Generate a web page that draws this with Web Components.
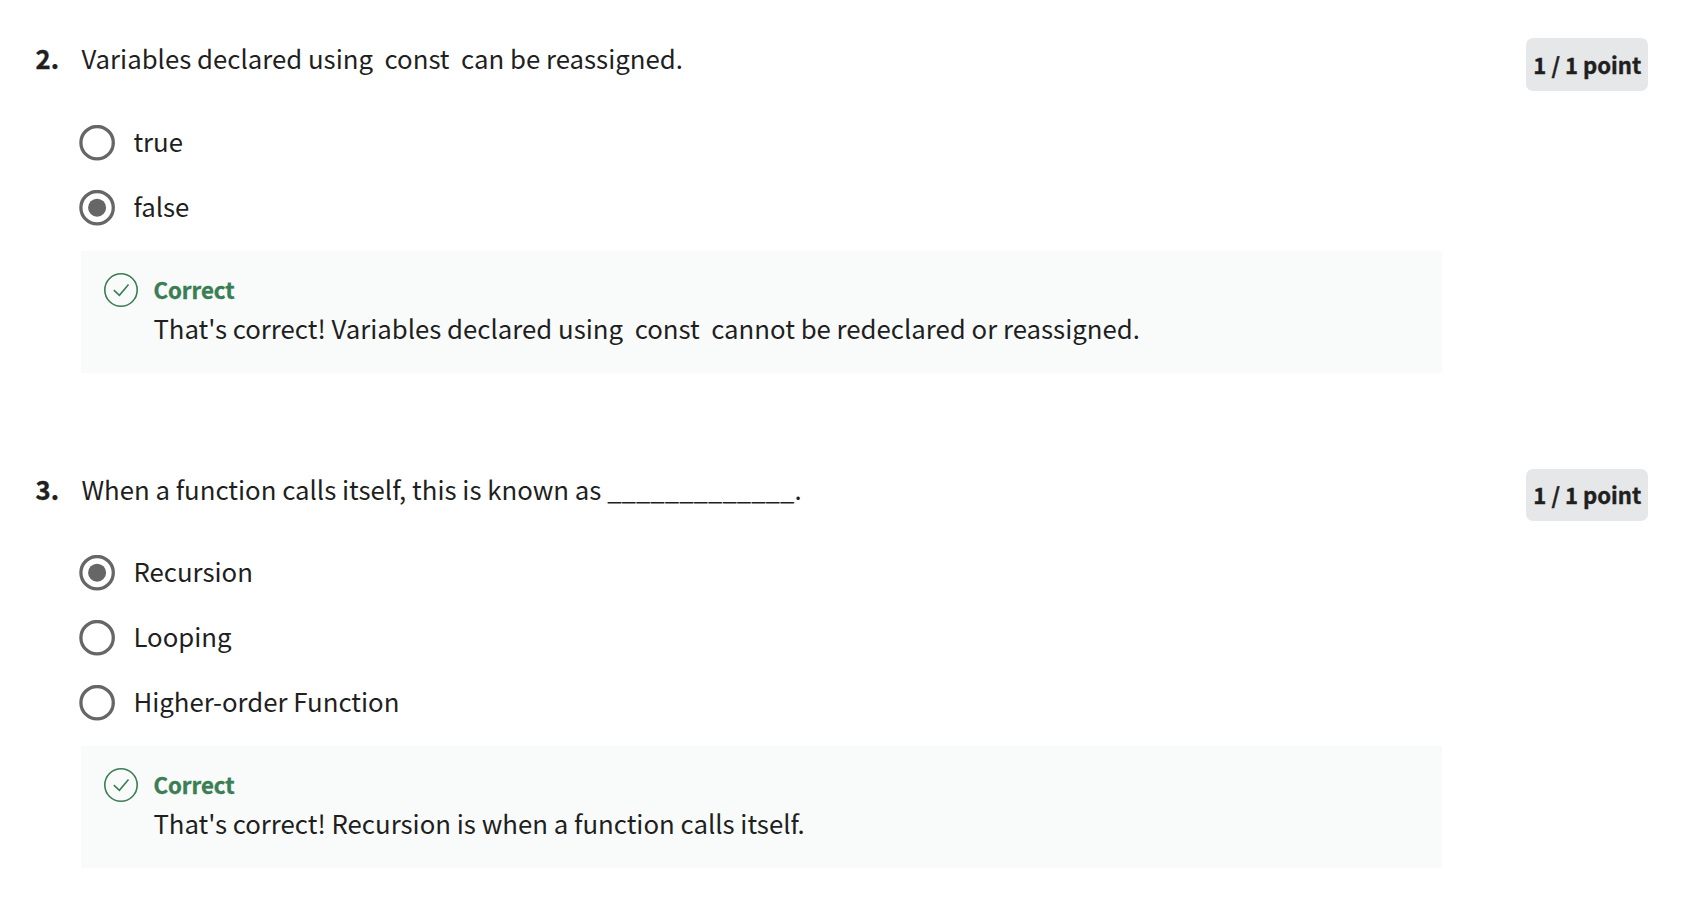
<!DOCTYPE html>
<html lang="en"><head><meta charset="utf-8"><title>Quiz</title>
<style>body{margin:0;background:#fff;color:#1f1f1f;font-family:"Noto Sans CJK SC","Noto Sans",sans-serif}</style></head>
<body>
<quiz-list>
<quiz-question number="2." points="1 / 1 point">
<span slot="prompt">Variables declared using&nbsp; const&nbsp; can be reassigned.</span>
<quiz-option>true</quiz-option><quiz-option checked>false</quiz-option>
<quiz-feedback slot="feedback" heading="Correct">That's correct! Variables declared using&nbsp; const&nbsp; cannot be redeclared or reassigned.</quiz-feedback>
</quiz-question>
<quiz-question number="3." points="1 / 1 point" style="--prompt-height:41px;--badge-height:52px;--badge-line:51px">
<span slot="prompt">When a function calls itself, this is known as _____________.</span>
<quiz-option checked>Recursion</quiz-option><quiz-option>Looping</quiz-option><quiz-option>Higher-order Function</quiz-option>
<quiz-feedback slot="feedback" heading="Correct">That's correct! Recursion is when a function calls itself.</quiz-feedback>
</quiz-question>
</quiz-list>
<script>
const define=(name,render)=>customElements.define(name,class extends HTMLElement{
  constructor(){super();this.attachShadow({mode:'open'});}
  connectedCallback(){this.shadowRoot.innerHTML=render(this);}
});
define('quiz-list',()=>`<style>:host{display:flex;flex-direction:column;gap:95px;padding:38px 52px 0 35px;height:900px;box-sizing:border-box;overflow:hidden}</style><slot></slot>`);
define('quiz-question',el=>`<style>
:host{display:grid;flex:none;grid-template-columns:46px 1361px 1fr;grid-template-rows:53px;font-size:25.77px;align-items:start}
.num,.prompt{line-height:var(--prompt-height,39px)}
.num{font-weight:700;font-size:25.7px;padding-left:.5px;-webkit-text-stroke:.35px}
.prompt{white-space:nowrap;padding-left:.4px}
.pts{justify-self:end;align-self:end;box-sizing:border-box;width:122px;height:var(--badge-height,53px);border-radius:7px;background:#e5e7e8;font-weight:700;font-size:22.1px;line-height:var(--badge-line,53px);padding-left:.6px;text-align:center;white-space:nowrap;-webkit-text-stroke:.4px}
.opts{grid-column:2;display:grid;grid-auto-rows:65px;margin-top:19px}
.fb{grid-column:2;margin-top:11px}
</style><div class="num">${el.getAttribute('number')}</div><div class="prompt"><slot name="prompt"></slot></div><div class="pts">${el.getAttribute('points')}</div><div class="opts"><slot></slot></div><div class="fb"><slot name="feedback"></slot></div>`);
define('quiz-option',el=>`<style>:host{display:flex;align-items:center;gap:18.4px;margin-left:-2px;line-height:38px}svg{display:block}span{padding-bottom:3px}</style>
<svg width="36" height="36" viewBox="0 0 36 36"><circle cx="18.1" cy="17.7" r="16.2" fill="#fff" stroke="#666" stroke-width="3.3"/>${el.hasAttribute('checked')?'<circle cx="18.1" cy="17.7" r="9" fill="#666"/>':''}</svg><span><slot></slot></span>`);
define('quiz-feedback',el=>`<style>:host{display:grid;grid-template-columns:34px 1fr;column-gap:15.4px;box-sizing:border-box;height:122px;padding:19px 23px 20px;background:#f9fbfa}
svg{display:block;margin-top:3px}.h{color:#3b7d54;font-weight:700;font-size:22.2px;line-height:38px;-webkit-text-stroke:.4px}.t{line-height:39px}</style>
<svg width="34" height="34" viewBox="0 0 34 34" fill="none" stroke="#3b7d54" stroke-width="1.6"><circle cx="17" cy="17" r="16.2"/><path d="M9.8 17.1l5.6 5.2L24.5 11.5"/></svg>
<div><div class="h">${el.getAttribute('heading')}</div><div class="t"><slot></slot></div></div>`);
</script></body></html>
